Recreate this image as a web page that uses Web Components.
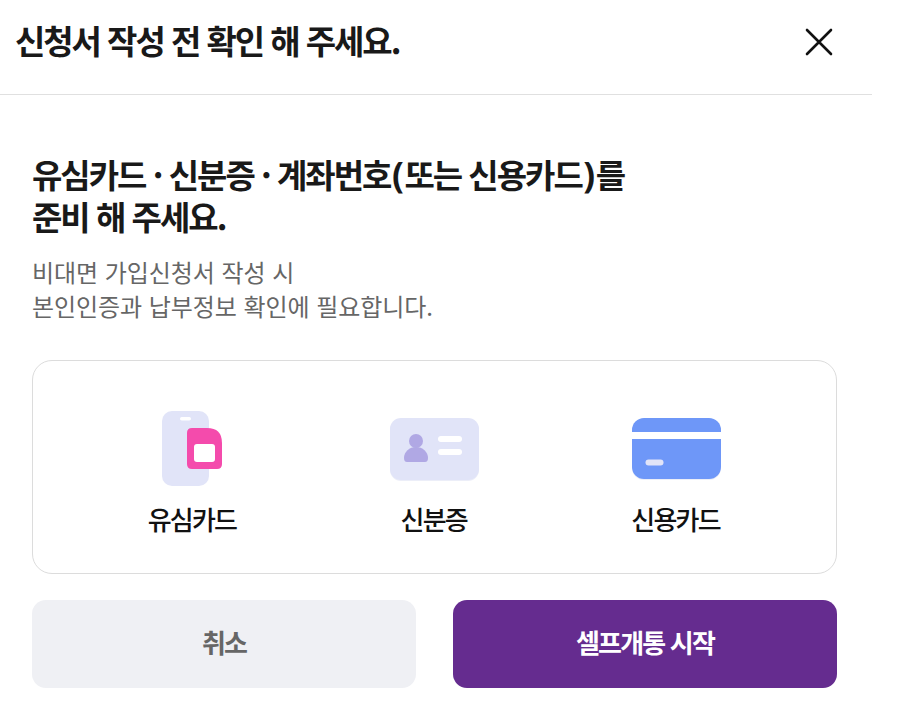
<!DOCTYPE html>
<html lang="ko"><head><meta charset="utf-8"><style>
html,body{margin:0;background:#fff;font-family:"Noto Sans CJK KR","Noto Sans",sans-serif}
</style></head><body>
<apply-dialog></apply-dialog>
<script>
const define=(name,html)=>customElements.define(name,class extends HTMLElement{constructor(){super();this.attachShadow({mode:'open'}).innerHTML=html}});
define('dialog-header',`<style>
:host{display:flex;align-items:center;justify-content:space-between;border-bottom:1px solid #e0e0e0;padding:0 38px 10px 15px;height:84px}
h1{margin:0;font-size:33px;font-weight:700;letter-spacing:-2.05px;color:#191919;line-height:48px;position:relative;top:-2px}
svg{display:block}
</style><h1><slot></slot></h1><svg width="30" height="30" viewBox="0 0 30 30"><path d="M3 3L27 27M27 3L3 27" stroke="#111" stroke-width="2.6" stroke-linecap="round"/></svg>`);
define('doc-item',`<style>
:host{display:flex;flex-direction:column;align-items:center;width:120px}
.ic{height:76px;display:flex;align-items:center;justify-content:center}
.t{margin-top:14px;font-size:26px;font-weight:500;letter-spacing:-1.8px;line-height:36px;color:#111}
</style><div class="ic"><slot name="icon"></slot></div><div class="t"><slot></slot></div>`);
define('action-button',`<style>
:host{display:flex;align-items:center;justify-content:center;height:88px;box-sizing:border-box;padding-bottom:6px;border-radius:14px;flex:1;font-size:26px;font-weight:700;letter-spacing:-1.8px;background:#eff0f4;color:#666}
:host([primary]){background:#652c8f;color:#fff}
</style><slot></slot>`);
define('apply-dialog',`<style>
:host{display:block;width:872px}
main{padding:58px 35px 0 32px}
h2{margin:0;font-size:33px;font-weight:700;letter-spacing:-2px;line-height:42px;color:#191919}
h2 span{font-family:"Noto Sans",sans-serif;font-size:35px;line-height:0;letter-spacing:0.6px;margin-left:1.5px}
p{margin:18px 0 0;font-size:24px;letter-spacing:-0.06px;line-height:34px;color:#666;font-weight:400}
.box{margin-top:37px;height:214px;box-sizing:border-box;padding:14px 39.5px 0 38px;border:1px solid #dcdcdc;border-radius:20px;display:grid;grid-template-columns:repeat(3,1fr);align-items:center;justify-items:center}
.btns{display:flex;gap:37px;margin-top:26px}
</style>
<dialog-header>신청서 작성 전 확인 해 주세요.</dialog-header>
<main>
<h2>유심카드 · 신분증 · 계좌번호<span>(</span>또는 신용카드<span>)</span>를<br>준비 해 주세요.</h2>
<p>비대면 가입신청서 작성 시<br>본인인증과 납부정보 확인에 필요합니다.</p>
<div class="box">
<doc-item><svg slot="icon" width="62" height="76" viewBox="0 0 62 76"><g transform="translate(1,0)"><rect x="0" y="0" width="47" height="75" rx="10" fill="#e1e4f8"/><rect x="18" y="6" width="11" height="3.5" rx="1.7" fill="#fff"/><path d="M30 17h15q15 0 15 15v21q0 5-5 5H30q-5 0-5-5V22q0-5 5-5z" fill="#f44bac"/><rect x="32" y="33" width="21" height="18" rx="3" fill="#fff"/></g></svg>유심카드</doc-item>
<doc-item><svg slot="icon" width="92" height="66" viewBox="0 0 92 66"><g transform="translate(1,1)"><rect x="1" y="2" width="89" height="62" rx="11" fill="#eceef8"/><rect x="1" y="1" width="89" height="62" rx="11" fill="#e1e4f8"/><circle cx="27" cy="24" r="7" fill="#b0a8e4"/><path d="M15 41a12 11 0 0 1 24 0q0 4-3 4H18q-3 0-3-4z" fill="#b0a8e4"/><rect x="49" y="19" width="24" height="6" rx="3" fill="#fff"/><rect x="49" y="32" width="24" height="6" rx="3" fill="#fff"/></g></svg>신분증</doc-item>
<doc-item><svg slot="icon" width="92" height="66" viewBox="0 0 92 66"><g transform="translate(0,1)"><rect x="2" y="2" width="89" height="61" rx="12" fill="#eceef8"/><rect x="2" y="1" width="89" height="61" rx="12" fill="#6e97f8"/><rect x="2" y="15" width="89" height="7" fill="#fff"/><rect x="15.5" y="42.5" width="18" height="6" rx="3" fill="#e1e4f8"/></g></svg>신용카드</doc-item>
</div>
<div class="btns"><action-button>취소</action-button><action-button primary>셀프개통 시작</action-button></div>
</main>`);
</script></body></html>
